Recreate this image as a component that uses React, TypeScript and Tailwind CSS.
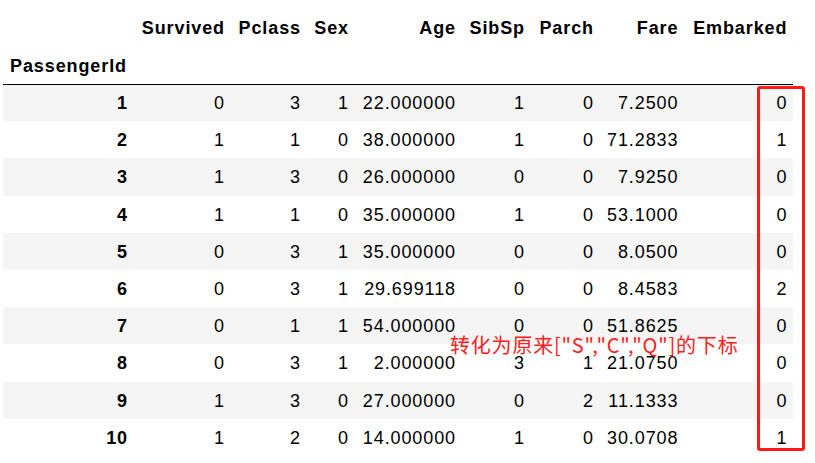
import React from "react";

const columns = [
  { key: "id", label: "", w: "w-[131px]" },
  { key: "Survived", label: "Survived", w: "w-[97px]" },
  { key: "Pclass", label: "Pclass", w: "w-[76px]" },
  { key: "Sex", label: "Sex", w: "w-[48px]" },
  { key: "Age", label: "Age", w: "w-[107px]" },
  { key: "SibSp", label: "SibSp", w: "w-[69px]" },
  { key: "Parch", label: "Parch", w: "w-[69px]" },
  { key: "Fare", label: "Fare", w: "w-[84px]" },
  { key: "Embarked", label: "Embarked", w: "w-[109px]" },
];

const rows: (string | number)[][] = [
  [1, 0, 3, 1, "22.000000", 1, 0, "7.2500", 0],
  [2, 1, 1, 0, "38.000000", 1, 0, "71.2833", 1],
  [3, 1, 3, 0, "26.000000", 0, 0, "7.9250", 0],
  [4, 1, 1, 0, "35.000000", 1, 0, "53.1000", 0],
  [5, 0, 3, 1, "35.000000", 0, 0, "8.0500", 0],
  [6, 0, 3, 1, "29.699118", 0, 0, "8.4583", 2],
  [7, 0, 1, 1, "54.000000", 0, 0, "51.8625", 0],
  [8, 0, 3, 1, "2.000000", 3, 1, "21.0750", 0],
  [9, 1, 3, 0, "27.000000", 0, 2, "11.1333", 0],
  [10, 1, 2, 0, "14.000000", 1, 0, "30.0708", 1],
];

export default function App() {
  return (
    <div className="relative w-[815px] h-[463px] pt-[1px] bg-white overflow-hidden font-['Liberation_Sans',Arial,sans-serif] text-[18px] tracking-[0.9px] text-black">
      <table className="ml-[3px] table-fixed border-collapse">
        <thead>
          <tr className="h-[46px]">
            {columns.map((c) => (
              <th
                key={c.key}
                className={`${c.w} pl-[7px] pr-[6px] pt-[8px] text-right font-bold leading-[21px]`}
              >
                {c.label}
              </th>
            ))}
          </tr>
          <tr className="h-[37px] border-b border-black">
            <th className="px-[7px] pt-[3px] text-left font-bold leading-[21px]">
              PassengerId
            </th>
            {columns.slice(1).map((c) => (
              <th key={c.key} />
            ))}
          </tr>
        </thead>
        <tbody>
          {rows.map((r, i) => (
            <tr
              key={i}
              className={`h-[37.2px] ${i % 2 === 0 ? "bg-[#f5f5f5]" : "bg-white"}`}
            >
              {r.map((v, j) => (
                <td
                  key={j}
                  className={`pl-[7px] pr-[6px] pt-[2px] text-right leading-[21px] ${j === 0 ? "font-bold" : ""}`}
                >
                  {v}
                </td>
              ))}
            </tr>
          ))}
        </tbody>
      </table>

      {/* annotation */}
      <div className="absolute left-[757px] top-[86px] w-[48px] h-[365px] border-[3px] border-[#ff1a1a] rounded-[3px]" />
      <div className="absolute left-[450px] top-[333px] text-[20px] leading-[24px] tracking-[0.8px] text-[#ff2020] whitespace-nowrap font-['Noto_Sans_CJK_SC',sans-serif]">
        转化为原来["S","C","Q"]的下标
      </div>
    </div>
  );
}
